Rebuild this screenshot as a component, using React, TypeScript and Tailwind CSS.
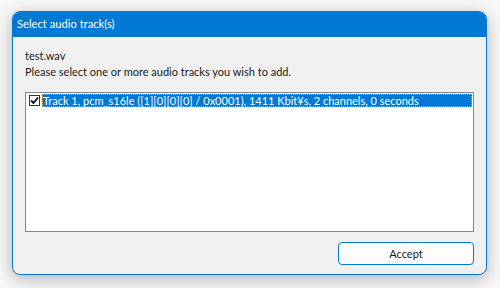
import React from "react";

export default function App() {
  const font = { fontFamily: 'Lato, "Noto Sans", "Liberation Sans", sans-serif' };
  return (
    <div className="w-[500px] h-[288px] bg-[#f7f7f7] pt-[11px] pl-[12px]" style={font}>
      <div className="w-[475px] h-[264px] flex flex-col rounded-[8px] border border-[#0078d4] bg-[#f0f0f0] shadow-[0_4px_16px_rgba(0,0,0,0.28)] overflow-hidden">
        <div className="h-[25px] bg-[#0078d4] text-white text-[11.2px] flex items-center pl-[4px] shrink-0">
          Select audio track(s)
        </div>
        <div className="flex flex-col px-[12px] pt-[11px] text-[11px] text-[#1a1a1a] leading-[16px]">
          <div>test.wav</div>
          <div>Please select one or more audio tracks you wish to add.</div>
          <div className="mt-[12px] h-[140px] w-[449px] border border-[#828790] bg-white pt-[1px] pl-[3px] pr-[1px]">
            <div className="flex items-center h-[13px]">
              <div className="w-[11px] h-[11px] border border-[#333] bg-white flex items-center justify-center shrink-0">
                <svg width="9" height="9" viewBox="0 0 9 9">
                  <path d="M1 4.5 L3.5 7 L8 1.5" stroke="#000" strokeWidth="1.8" fill="none" />
                </svg>
              </div>
              <div className="ml-[2px] flex-1 h-[13px] bg-[#0078d7] text-white leading-[13px] pl-[1px] outline outline-1 outline-dotted outline-[#e6a23c] -outline-offset-1 whitespace-nowrap">
                Track 1, pcm_s16le ([1][0][0][0] / 0x0001), 1411 Kbit¥s, 2 channels, 0 seconds
              </div>
            </div>
          </div>
          <div className="flex justify-end mt-[10px]">
            <button className="w-[136px] h-[23px] rounded-[4px] border border-[#0078d4] bg-[#fdfdfd] text-[11px] text-[#1a1a1a] leading-[16px]">
              Accept
            </button>
          </div>
        </div>
      </div>
    </div>
  );
}
